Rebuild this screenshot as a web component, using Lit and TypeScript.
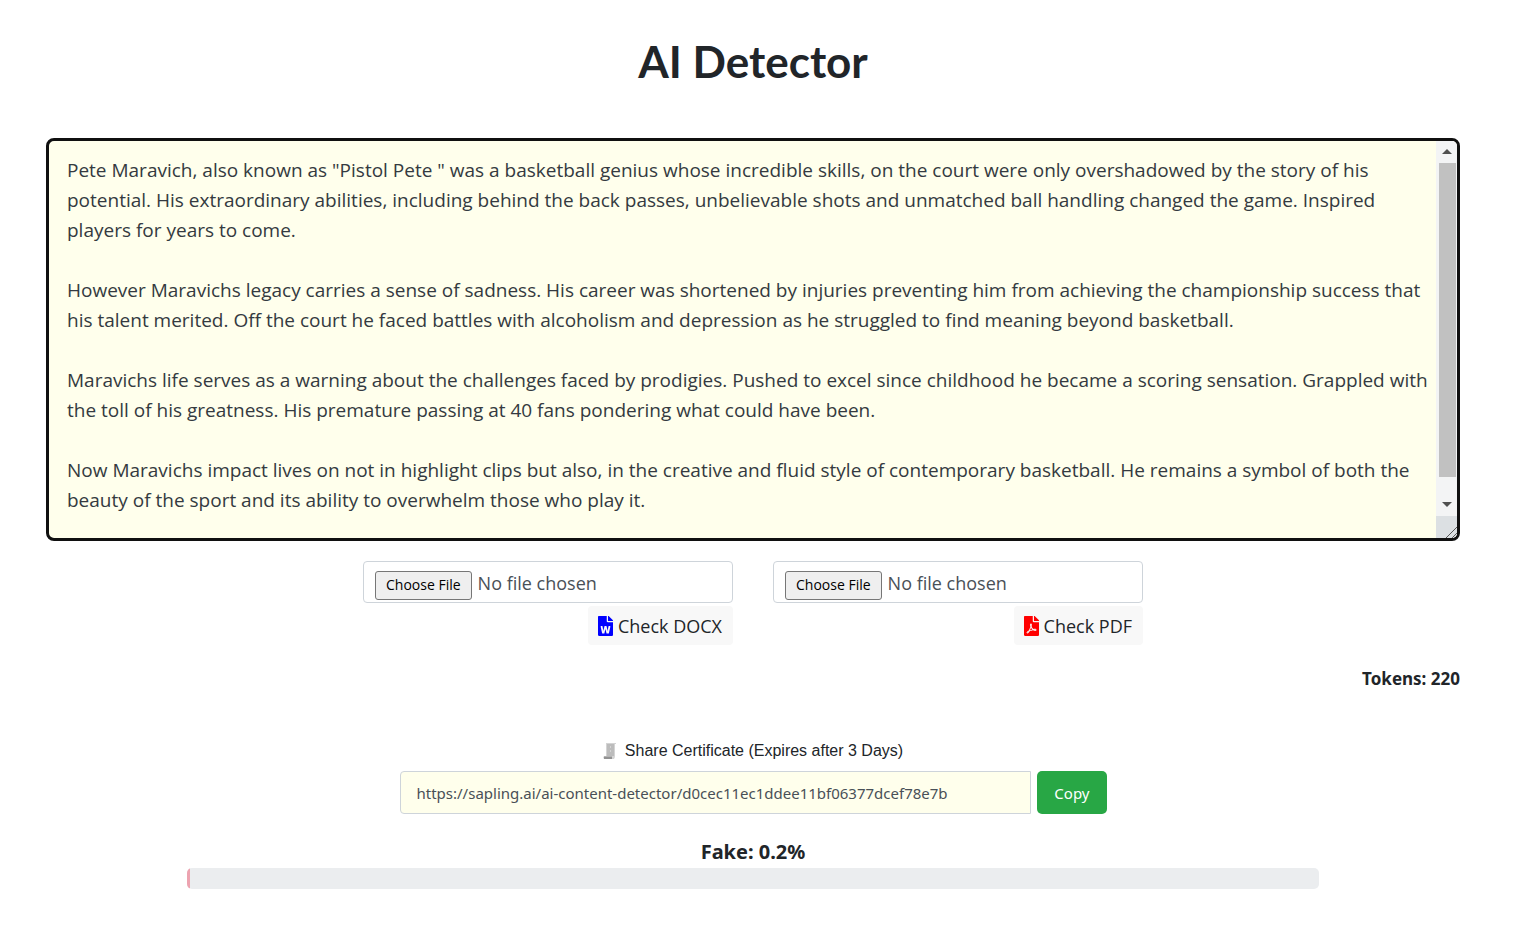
import { LitElement, html, css, svg } from "lit";
import { customElement, property } from "lit/decorators.js";
import { styleMap } from "lit/directives/style-map.js";

const ESSAY = [
  'Pete Maravich, also known as "Pistol Pete " was a basketball genius whose incredible skills, on the court were only overshadowed by the story of his potential. His extraordinary abilities, including behind the back passes, unbelievable shots and unmatched ball handling changed the game. Inspired players for years to come.',
  "However Maravichs legacy carries a sense of sadness. His career was shortened by injuries preventing him from achieving the championship success that his talent merited. Off the court he faced battles with alcoholism and depression as he struggled to find meaning beyond basketball.",
  "Maravichs life serves as a warning about the challenges faced by prodigies. Pushed to excel since childhood he became a scoring sensation. Grappled with the toll of his greatness. His premature passing at 40 fans pondering what could have been.",
  "Now Maravichs impact lives on not in highlight clips but also, in the creative and fluid style of contemporary basketball. He remains a symbol of both the beauty of the sport and its ability to overwhelm those who play it.",
].join("\n\n");

const WORD_ICON = svg`<path d="M224 136V0H24C10.7 0 0 10.7 0 24v464c0 13.3 10.7 24 24 24h336c13.3 0 24-10.7 24-24V160H248c-13.2 0-24-10.8-24-24zm57.1 120H305c7.7 0 13.4 7.1 11.7 14.7l-38 168c-1.2 5.5-6.1 9.3-11.7 9.3h-38c-5.5 0-10.3-3.8-11.6-9.1-25.8-103.5-20.8-81.2-25.6-110.5h-.5c-1.1 14.3-2.4 17.4-25.6 110.5-1.3 5.3-6.1 9.1-11.6 9.1H117c-5.6 0-10.5-3.9-11.7-9.4l-37.8-168c-1.7-7.5 4-14.6 11.7-14.6h24.5c5.7 0 10.7 4 11.8 9.7 15.6 78 20.1 109.5 21 122.2 1.6-10.2 7.3-32.7 29.4-122.7 1.3-5.4 6.1-9.1 11.7-9.1h29.1c5.6 0 10.4 3.8 11.7 9.2 24 100.4 28.8 124 29.6 129.4-.2-11.2-2.6-17.8 21.6-129.2 1-5.6 5.9-9.5 11.5-9.5zM384 121.9v6.1H256V0h6.1c6.4 0 12.5 2.5 17 7l97.9 98c4.5 4.5 7 10.6 7 16.9z"/>`;

const PDF_ICON = svg`<path d="M181.9 256.1c-5-16-4.9-46.9-2-46.9 8.4 0 7.6 36.9 2 46.9zm-1.7 47.2c-7.7 20.2-17.3 43.3-28.4 62.7 18.3-7 39-17.2 62.9-21.9-12.7-9.6-24.9-23.4-34.5-40.8zM86.1 428.1c0 .8 13.2-5.4 34.9-40.2-6.7 6.3-29.1 24.5-34.9 40.2zM248 160h136v328c0 13.3-10.7 24-24 24H24c-13.3 0-24-10.7-24-24V24C0 10.7 10.7 0 24 0h200v136c0 13.2 10.8 24 24 24zm-8 171.8c-20-12.2-33.3-29-42.7-53.8 4.5-18.5 11.6-46.6 6.2-64.2-4.7-29.4-42.4-26.5-47.8-6.8-5 18.3-.4 44.1 8.1 77-11.6 27.6-28.7 64.6-40.8 85.8-.1 0-.1.1-.2.1-27.1 13.9-73.6 44.5-54.5 68 5.6 6.9 16 10 21.5 10 17.9 0 35.7-18 61.1-61.8 25.8-8.5 54.1-19.1 79-23.2 21.7 11.8 47.1 19.5 64 19.5 29.2 0 31.2-32 19.7-43.4-13.9-13.6-54.3-9.7-73.6-7.2zM377 105L279 7c-4.5-4.5-10.6-7-17-7h-6v128h128v-6.1c0-6.3-2.5-12.4-7-16.9zm-74.1 255.3c4.1-2.7-2.5-11.9-42.8-9 37.1 15.8 42.8 9 42.8 9z"/>`;

@customElement("file-check")
class FileCheck extends LitElement {
  @property() kind: "DOCX" | "PDF" = "DOCX";

  static styles = css`
    :host {
      display: flex;
      flex-direction: column;
      align-items: flex-end;
      gap: 3px;
    }
    .picker {
      box-sizing: border-box;
      width: 100%;
      height: 42px;
      padding: 7px 11px;
      border: 1px solid #ced4da;
      border-radius: 4px;
      background: #fff;
      color: #495057;
      font: 18px/28px "Open Sans", "Noto Sans", sans-serif;
    }
    .picker::file-selector-button {
      box-sizing: border-box;
      height: 29px;
      margin: 0 6px 0 0;
      padding: 0 10px;
      border: 1px solid #767676;
      border-radius: 3px;
      background: #efefef;
      color: #000;
      font: 14px/26px "Open Sans", "Noto Sans", sans-serif;
    }
    .check {
      display: flex;
      align-items: center;
      gap: 5px;
      height: 39px;
      padding: 0 11px 0 10px;
      border: 0;
      border-radius: 4px;
      background: #f8f8f8;
      color: #212529;
      font: 18px/28px "Open Sans", "Noto Sans", sans-serif;
    }
    .icon {
      width: 15px;
      height: 20px;
    }
    .docx {
      fill: #00f;
    }
    .pdf {
      fill: #f00;
    }
  `;

  render() {
    const word = this.kind === "DOCX";
    return html`
      <input class="picker" type="file" aria-label="${this.kind} file" />
      <button class="check" type="button">
        <svg class="icon ${word ? "docx" : "pdf"}" viewBox="0 0 384 512" aria-hidden="true">
          ${word ? WORD_ICON : PDF_ICON}
        </svg>
        Check ${this.kind}
      </button>
    `;
  }
}

@customElement("app-root")
class AppRoot extends LitElement {
  @property({ type: Number }) fake = 0.2;
  @property({ type: Number }) tokens = 220;

  static styles = css`
    :host {
      display: block;
      padding: 33px 63px 40px 46px;
      background: #fff;
      color: #212529;
      font: 18px/28px "Noto Sans", "Open Sans", sans-serif;
    }
    .title {
      margin: 0 0 49px;
      text-align: center;
      font: 700 44px/56px Lato, sans-serif;
    }
    .editor {
      display: flex;
      box-sizing: border-box;
      height: 403px;
      border: 3px solid #101010;
      border-radius: 8px;
      overflow: hidden;
      background: #ffffec;
    }
    .text {
      flex: 1;
      min-width: 0;
      box-sizing: border-box;
      margin: 0;
      padding: 14px 4px 14px 18px;
      border: 0;
      outline: 0;
      resize: none;
      overflow: hidden;
      background: transparent;
      color: #343a40;
      font: 19px/30px "Open Sans", "Noto Sans", sans-serif;
    }
    .scroll {
      display: flex;
      flex-direction: column;
      width: 21px;
      background: #f3f4f5;
    }
    .arrow {
      display: block;
      width: 21px;
      height: 22px;
      fill: #505050;
    }
    .track {
      flex: 1;
      padding: 0 1px 0 3px;
    }
    .thumb {
      height: 95%;
      background: #c1c1c1;
    }
    .grip {
      display: block;
      width: 21px;
      height: 22px;
      background: #dce0e3;
      stroke: #555;
      fill: none;
    }
    .files {
      display: grid;
      grid-template-columns: 1fr 1fr;
      gap: 40px;
      width: 780px;
      max-width: 100%;
      margin: 20px auto 0;
    }
    .tokens {
      margin: 20px 0 0;
      text-align: right;
      font-weight: 700;
      font-size: 17px;
    }
    .share {
      width: 50%;
      margin: 44px auto 0;
    }
    .caption {
      display: flex;
      align-items: center;
      justify-content: center;
      gap: 8px;
      margin-bottom: 6px;
      font: 16px/28px "Liberation Sans", Arial, sans-serif;
    }
    .scroll-icon {
      width: 14px;
      height: 16px;
    }
    .row {
      display: flex;
      gap: 6px;
    }
    .url {
      flex: 1;
      min-width: 0;
      box-sizing: border-box;
      height: 43px;
      padding: 0 16px;
      border: 1px solid #ced4da;
      border-radius: 4px 0 0 4px;
      background: #ffffec;
      color: #495057;
      font: 15px/24px "Noto Sans", "Open Sans", sans-serif;
    }
    .copy {
      height: 43px;
      padding: 0 17px;
      border: 0;
      border-radius: 5px;
      background: #28a745;
      color: #fff;
      font: 15px/24px "Noto Sans", "Open Sans", sans-serif;
    }
    .score {
      margin: 24px 0 2px;
      text-align: center;
      font: 700 20px/28px "Noto Sans", "Open Sans", sans-serif;
    }
    .bar {
      width: 80%;
      height: 21px;
      margin: 0 auto;
      border-radius: 5px;
      overflow: hidden;
      background: #ebedef;
    }
    .fill {
      height: 100%;
      background: #eda3b0;
    }
  `;

  render() {
    return html`
      <h1 class="title">AI Detector</h1>
      <div class="editor">
        <textarea class="text" aria-label="Text to check" spellcheck="false" .value=${ESSAY}></textarea>
        <div class="scroll" aria-hidden="true">
          <svg class="arrow" viewBox="0 0 21 22"><path d="M6 13l5-5 5 5z" /></svg>
          <div class="track"><div class="thumb"></div></div>
          <svg class="arrow" viewBox="0 0 21 22"><path d="M6 8l5 5 5-5z" /></svg>
          <svg class="grip" viewBox="0 0 21 22"><path d="M10 22L21 11M16 22l5-5" /></svg>
        </div>
      </div>
      <div class="files">
        <file-check kind="DOCX"></file-check>
        <file-check kind="PDF"></file-check>
      </div>
      <p class="tokens">Tokens: ${this.tokens}</p>
      <div class="share">
        <label class="caption" for="share-url">
          <svg class="scroll-icon" viewBox="0 0 14 16" aria-hidden="true">
            <path d="M3 0h10v1h-1v12q0 2-1 3H3z" fill="#d4d4d4" />
            <path d="M4 2h7M4 4h3M8 4h3M4 6h7M4 8h3M8 8h3M4 10h7M4 12h7" stroke="#a4a4a4" />
            <path d="M1 13h8v3H1q-1-1 0-3z" fill="#b4b4b4" />
            <path d="M1 15h8" stroke="#707070" />
          </svg>
          Share Certificate (Expires after 3 Days)
        </label>
        <div class="row">
          <input
            class="url"
            id="share-url"
            type="text"
            readonly
            value="https://sapling.ai/ai-content-detector/d0cec11ec1ddee11bf06377dcef78e7b"
          />
          <button class="copy" type="button">Copy</button>
        </div>
      </div>
      <p class="score">Fake: ${this.fake}%</p>
      <div class="bar" role="progressbar" aria-label="Fake" aria-valuenow=${this.fake} aria-valuemin="0" aria-valuemax="100">
        <div class="fill" style=${styleMap({ width: `${this.fake}%` })}></div>
      </div>
    `;
  }
}
